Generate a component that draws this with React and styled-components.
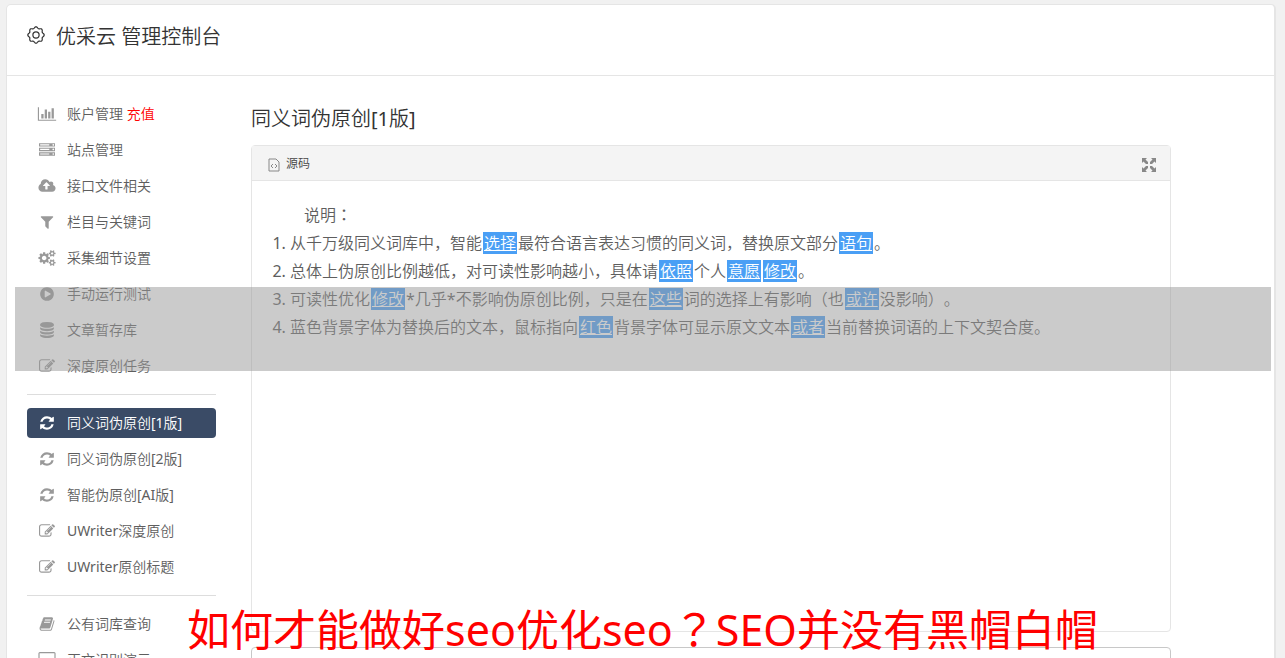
import styled, { createGlobalStyle } from "styled-components";

const icons = {
  chart: {
    viewBox: "0 0 2048 1792",
    d: "M640 896v512h-256v-512h256zm384-512v1024h-256v-1024h256zm1024 1152v128h-2048v-1536h128v1408h1920zm-640-896v768h-256v-768h256zm384-384v1152h-256v-1152h256z",
  },
  server: {
    viewBox: "0 0 1792 1792",
    d: "M128 1408h1024v-128h-1024v128zm0-512h1024v-128h-1024v128zm1568 448q0-40-28-68t-68-28-68 28-28 68 28 68 68 28 68-28 28-68zm-1568-960h1024v-128h-1024v128zm1568 448q0-40-28-68t-68-28-68 28-28 68 28 68 68 28 68-28 28-68zm0-512q0-40-28-68t-68-28-68 28-28 68 28 68 68 28 68-28 28-68zm96 832v384h-1792v-384h1792zm0-512v384h-1792v-384h1792zm0-512v384h-1792v-384h1792z",
  },
  upload: {
    viewBox: "-64 0 1920 1792",
    d: "M1216 864q0-14-9-23l-352-352q-9-9-23-9t-23 9l-351 351q-10 12-10 24 0 14 9 23t23 9h224v352q0 13 9.5 22.5t22.5 9.5h192q13 0 22.5-9.5t9.5-22.5v-352h224q13 0 22.5-9.5t9.5-22.5zm640 288q0 159-112.5 271.5t-271.5 112.5h-1088q-185 0-316.5-131.5t-131.5-316.5q0-130 70-240t188-165q-2-30-2-43 0-212 150-362t362-150q156 0 285.5 87t188.5 231q71-62 166-62 106 0 181 75t75 181q0 76-41 138 130 31 213.5 135.5t83.5 238.5z",
  },
  filter: {
    viewBox: "0 0 1792 1792",
    d: "M1595 295q17 41-14 70l-493 493v742q0 42-39 59-13 5-25 5-27 0-45-19l-256-256q-19-19-19-45v-486l-493-493q-31-29-14-70 17-39 59-39h1280q42 0 59 39z",
  },
  cogs: {
    viewBox: "-64 0 1920 1792",
    d: "M832 896q0-106-75-181t-181-75-181 75-75 181 75 181 181 75 181-75 75-181zm768 512q0-52-38-90t-90-38-90 38-38 90q0 53 37.5 90.5t90.5 37.5 90.5-37.5 37.5-90.5zm0-1024q0-52-38-90t-90-38-90 38-38 90q0 53 37.5 90.5t90.5 37.5 90.5-37.5 37.5-90.5zm-384 421v185q0 10-7 19.5t-16 10.5l-155 24q-11 35-32 76 34 48 90 115 7 11 7 20 0 12-7 19-23 30-82.5 89.5t-78.5 59.5q-11 0-21-7l-115-90q-37 19-77 31-11 108-23 155-7 24-30 24h-186q-11 0-20-7.5t-10-17.5l-23-153q-34-10-75-31l-118 89q-7 7-20 7-11 0-21-8-144-133-144-160 0-9 7-19 10-14 41-53t47-61q-23-44-35-82l-152-24q-10-1-17-9.5t-7-19.5v-185q0-10 7-19.5t16-10.5l155-24q11-35 32-76-34-48-90-115-7-11-7-20 0-12 7-20 22-30 82-89t79-59q11 0 21 7l115 90q34-18 77-32 11-108 23-154 7-24 30-24h186q11 0 20 7.5t10 17.5l23 153q34 10 75 31l118-89q8-7 20-7 11 0 21 8 144 133 144 160 0 8-7 19-12 16-42 54t-45 60q23 48 34 82l152 23q10 2 17 10.5t7 19.5zm640 533v140q0 16-149 31-12 27-30 52 51 113 51 138 0 4-4 7-122 71-124 71-8 0-46-47t-52-68q-20 2-30 2t-30-2q-14 21-52 68t-46 47q-2 0-124-71-4-3-4-7 0-25 51-138-18-25-30-52-149-15-149-31v-140q0-16 149-31 13-29 30-52-51-113-51-138 0-4 4-7 4-2 35-20t59-34 30-16q8 0 46 46.5t52 67.5q20-2 30-2t30 2q51-71 92-112l6-2q4 0 124 70 4 3 4 7 0 25-51 138 17 23 30 52 149 15 149 31zm0-1024v140q0 16-149 31-12 27-30 52 51 113 51 138 0 4-4 7-122 71-124 71-8 0-46-47t-52-68q-20 2-30 2t-30-2q-14 21-52 68t-46 47q-2 0-124-71-4-3-4-7 0-25 51-138-18-25-30-52-149-15-149-31v-140q0-16 149-31 13-29 30-52-51-113-51-138 0-4 4-7 4-2 35-20t59-34 30-16q8 0 46 46.5t52 67.5q20-2 30-2t30 2q51-71 92-112l6-2q4 0 124 70 4 3 4 7 0 25-51 138 17 23 30 52 149 15 149 31z",
  },
  play: {
    viewBox: "0 0 1792 1792",
    d: "M896 128q209 0 385.5 103t279.5 279.5 103 385.5-103 385.5-279.5 279.5-385.5 103-385.5-103-279.5-279.5-103-385.5 103-385.5 279.5-279.5 385.5-103zm384 823q32-18 32-55t-32-55l-544-320q-31-19-64-1-32 19-32 55v640q0 36 32 55 16 8 32 8 17 0 32-9z",
  },
  database: {
    viewBox: "0 0 1792 1792",
    d: "M896 768q237 0 443-43t325-127v170q0 69-103 128t-280 93.5-385 34.5-385-34.5-280-93.5-103-128v-170q119 84 325 127t443 43zm0 768q237 0 443-43t325-127v170q0 69-103 128t-280 93.5-385 34.5-385-34.5-280-93.5-103-128v-170q119 84 325 127t443 43zm0-384q237 0 443-43t325-127v170q0 69-103 128t-280 93.5-385 34.5-385-34.5-280-93.5-103-128v-170q119 84 325 127t443 43zm0-1152q208 0 385 34.5t280 93.5 103 128v128q0 69-103 128t-280 93.5-385 34.5-385-34.5-280-93.5-103-128v-128q0-69 103-128t280-93.5 385-34.5z",
  },
  edit: {
    viewBox: "0 0 1792 1792",
    d: "M888 1184l116-116-152-152-116 116v56h96v96h56zm440-720q-16-16-33 1l-350 350q-17 17-1 33t33-1l350-350q17-17 1-33zm80 594v190q0 119-84.5 203.5t-203.5 84.5h-832q-119 0-203.5-84.5t-84.5-203.5v-832q0-119 84.5-203.5t203.5-84.5h832q63 0 117 25 15 7 18 23 3 17-9 29l-49 49q-14 14-32 8-23-6-45-6h-832q-66 0-113 47t-47 113v832q0 66 47 113t113 47h832q66 0 113-47t47-113v-126q0-13 9-22l64-64q15-15 35-7t20 29zm-96-738l288 288-672 672h-288v-288zm444 132l-92 92-288-288 92-92q28-28 68-28t68 28l152 152q28 28 28 68t-28 68z",
  },
  refresh: {
    viewBox: "0 0 1792 1792",
    d: "M1639 1056q0 5-1 7-64 268-268 434.5t-478 166.5q-146 0-282.5-55t-243.5-157l-129 129q-19 19-45 19t-45-19-19-45v-448q0-26 19-45t45-19h448q26 0 45 19t19 45-19 45l-137 137q71 66 161 102t187 36q134 0 250-65t186-179q11-17 53-117 8-23 30-23h192q13 0 22.5 9.5t9.5 22.5zm25-800v448q0 26-19 45t-45 19h-448q-26 0-45-19t-19-45 19-45l138-138q-148-137-349-137-134 0-250 65t-186 179q-11 17-53 117-8 23-30 23h-199q-13 0-22.5-9.5t-9.5-22.5v-7q65-268 270-434.5t480-166.5q146 0 284 55.5t245 156.5l130-129q19-19 45-19t45 19 19 45z",
  },
  book: {
    viewBox: "0 0 1792 1792",
    d: "M1703 478q40 57 18 129l-275 906q-19 64-76.5 107.5t-122.5 43.5h-923q-77 0-148.5-53.5t-99.5-131.5q-24-67-2-127 0-4 3-27t4-37q1-8-3-21.5t-3-19.5q2-11 8-21t16.5-23.5 16.5-23.5q23-38 45-91.5t30-91.5q3-10 .5-30t-.5-28q3-11 17-28t17-23q21-36 42-92t25-90q1-9-2.5-32t.5-28q4-13 22-30.5t22-22.5q19-26 42.5-84.5t27.5-96.5q1-8-3-25.5t-2-26.5q2-8 9-18t18-23 17-21q8-12 16.5-30.5t15-35 16-36 19.5-32 26.5-23.5 36-11.5 47.5 5.5l-1 3q38-9 51-9h761q74 0 114 56t18 130l-274 906q-36 119-71.5 153.5t-128.5 34.5h-869q-27 0-38 15-11 16-1 43 24 70 144 70h923q29 0 56-15.5t35-41.5l300-987q7-22 5-57 38 15 59 43zm-1064 2q-4 13 2 22.5t20 9.5h608q13 0 25.5-9.5t16.5-22.5l21-64q4-13-2-22.5t-20-9.5h-608q-13 0-25.5 9.5t-16.5 22.5zm-83 256q-4 13 2 22.5t20 9.5h608q13 0 25.5-9.5t16.5-22.5l21-64q4-13-2-22.5t-20-9.5h-608q-13 0-25.5 9.5t-16.5 22.5z",
  },
  desktop: {
    viewBox: "0 0 1920 1792",
    d: "M1792 992v-832q0-13-9.5-22.5t-22.5-9.5h-1600q-13 0-22.5 9.5t-9.5 22.5v832q0 13 9.5 22.5t22.5 9.5h1600q13 0 22.5-9.5t9.5-22.5zm128-832v1088q0 66-47 113t-113 47h-544q0 37 16 77.5t32 71 16 43.5q0 26-19 45t-45 19h-512q-26 0-45-19t-19-45q0-14 16-44t32-70 16-78h-544q-66 0-113-47t-47-113v-1088q0-66 47-113t113-47h1600q66 0 113 47t47 113z",
  },
};

const menu = [
  [
    { icon: "chart", text: "账户管理", extra: "充值" },
    { icon: "server", text: "站点管理" },
    { icon: "upload", text: "接口文件相关" },
    { icon: "filter", text: "栏目与关键词" },
    { icon: "cogs", text: "采集细节设置" },
    { icon: "play", text: "手动运行测试" },
    { icon: "database", text: "文章暂存库" },
    { icon: "edit", text: "深度原创任务" },
  ],
  [
    { icon: "refresh", text: "同义词伪原创[1版]", active: true },
    { icon: "refresh", text: "同义词伪原创[2版]" },
    { icon: "refresh", text: "智能伪原创[AI版]" },
    { icon: "edit", text: "UWriter深度原创" },
    { icon: "edit", text: "UWriter原创标题" },
  ],
  [
    { icon: "book", text: "公有词库查询" },
    { icon: "desktop", text: "正文识别演示" },
  ],
];

const MenuIcon = ({ name }) => (
  <IconSvg viewBox={icons[name].viewBox} aria-hidden="true">
    <path fillRule="evenodd" d={icons[name].d} />
  </IconSvg>
);

// eight lobed outline of the header gear
const gearPath = () => {
  const points = [];
  for (let i = 0; i < 96; i++) {
    const a = (i / 96) * Math.PI * 2;
    const r = 7.5 + 0.7 * Math.cos(8 * a);
    points.push(
      `${(9 + r * Math.cos(a)).toFixed(2)} ${(9 + r * Math.sin(a)).toFixed(2)}`
    );
  }
  return `M${points.join("L")}Z`;
};

const App = () => {
  return (
    <>
      <GlobalStyle />
      <Card>
        <Header>
          <GearSvg viewBox="0 0 18 18" aria-hidden="true">
            <path d={gearPath()} />
            <circle cx="9" cy="9" r="3.1" />
          </GearSvg>
          <Title>优采云 管理控制台</Title>
        </Header>
        <Body>
          <Sidebar>
            {menu.map((group, index) => (
              <MenuGroup key={index}>
                {group.map((item) => (
                  <li key={item.text}>
                    <MenuLink href="#" $active={item.active}>
                      <MenuIcon name={item.icon} />
                      <MenuLabel>
                        {item.text}
                        {item.extra && <Recharge> {item.extra}</Recharge>}
                      </MenuLabel>
                    </MenuLink>
                  </li>
                ))}
              </MenuGroup>
            ))}
          </Sidebar>
          <Main>
            <SectionTitle>同义词伪原创[1版]</SectionTitle>
            <Editor>
              <Toolbar>
                <ToolButton type="button">
                  <SourceSvg viewBox="0 0 12 14" aria-hidden="true">
                    <path d="M1 1h7l3 3v9H1z" />
                    <path d="M5 6L3 8l2 2M7 6l2 2-2 2" />
                  </SourceSvg>
                  源码
                </ToolButton>
                <ToolButton type="button" aria-label="全屏">
                  <ExpandSvg viewBox="0 0 14 14" aria-hidden="true">
                    <path d="M0 0h5L3.500 1.500 6 4v2H4L1.500 3.500 0 5zM14 0v5l-1.500-1.500L10 6H8V4l2.500-2.500L9 0zM0 14V9l1.500 1.500L4 8h2v2l-2.500 2.500L5 14zM14 14H9l1.500-1.500L8 10V8h2l2.500 2.500L14 9z" />
                  </ExpandSvg>
                </ToolButton>
              </Toolbar>
              <Content>
                <Intro>
                  说明<Mark>：</Mark>
                </Intro>
                <Rules>
                  <li>
                    从千万级同义词库中，智能<Word>选择</Word>
                    最符合语言表达习惯的同义词，替换原文部分<Word>语句</Word>。
                  </li>
                  <li>
                    总体上伪原创比例越低，对可读性影响越小，具体请
                    <Word>依照</Word>个人<Word>意愿</Word>
                    <Word>修改</Word>。
                  </li>
                  <li>
                    可读性优化<Word>修改</Word>
                    *几乎*不影响伪原创比例，只是在<Word>这些</Word>
                    词的选择上有影响（也<Word>或许</Word>没影响）。
                  </li>
                  <li>
                    蓝色背景字体为替换后的文本，鼠标指向<Word>红色</Word>
                    背景字体可显示原文文本<Word>或者</Word>
                    当前替换词语的上下文契合度。
                  </li>
                </Rules>
              </Content>
            </Editor>
            <SourceInput aria-label="原文" />
          </Main>
        </Body>
      </Card>
      <Band />
      <Caption>
        如何才能做好seo优化seo<Mark>？</Mark>SEO并没有黑帽白帽
      </Caption>
    </>
  );
};

const GlobalStyle = createGlobalStyle`
  * {
    box-sizing: border-box;
  }

  body {
    margin: 0;
    height: 100vh;
    overflow: hidden;
    background: #f1f1f1;
    color: #5e5e5e;
    font-family: "Noto Sans", "Noto Sans CJK SC DemiLight", "Noto Sans CJK SC", sans-serif;
    font-size: 14px;
    text-spacing-trim: space-all;
  }
`;

const Card = styled.div`
  margin: 4px 9px 0 6px;
  background: #fff;
  border: 1px solid #e5e5e5;
  border-right-width: 2px;
  border-radius: 5px;
`;

const Header = styled.header`
  display: flex;
  align-items: center;
  gap: 11px;
  height: 71px;
  padding: 0 20px 10px;
  border-bottom: 1px solid #e5e5e5;
`;

const GearSvg = styled.svg`
  width: 18px;
  height: 18px;
  fill: none;
  stroke: #333;
  stroke-width: 1.2;
`;

const Title = styled.h1`
  margin: 0;
  padding-top: 3px;
  color: #333;
  font-size: 20px;
  font-weight: 400;
  line-height: 28px;
`;

const Body = styled.div`
  display: flex;
  gap: 35px;
  padding: 23px 103px 23px 20px;
`;

const Sidebar = styled.nav`
  flex: 0 0 189px;
`;

const MenuGroup = styled.ul`
  display: flex;
  flex-direction: column;
  gap: 6px;
  margin: 0;
  padding: 0;
  list-style: none;

  & + & {
    margin-top: 13px;
    padding-top: 13px;
    border-top: 1px solid #ddd;
  }
`;

const MenuLink = styled.a`
  display: flex;
  align-items: center;
  gap: 10px;
  height: 30px;
  padding: 0 10px;
  border-radius: 4px;
  background: ${(props) => (props.$active ? "#3a4b66" : "transparent")};
  color: ${(props) => (props.$active ? "#fff" : "#5e5e5e")};
  text-decoration: none;

  svg {
    fill: ${(props) => (props.$active ? "#fff" : "#999")};
  }
`;

const MenuLabel = styled.span`
  padding-bottom: 2px;
`;

const IconSvg = styled.svg`
  flex: none;
  width: 20px;
  height: 16px;
`;

const Recharge = styled.span`
  color: #f00;
`;

const Main = styled.main`
  flex: 1;
  min-width: 0;
`;

const SectionTitle = styled.h2`
  margin: 6px 0 12px;
  color: #333;
  font-size: 20px;
  font-weight: 400;
  line-height: 28px;
`;

const Editor = styled.section`
  margin-bottom: 15px;
  border: 1px solid #e5e5e5;
  border-radius: 4px;
`;

const Toolbar = styled.div`
  display: flex;
  align-items: center;
  justify-content: space-between;
  height: 35px;
  padding: 0 14px 0 16px;
  border-bottom: 1px solid #e5e5e5;
  background: #f4f4f4;
`;

const ToolButton = styled.button`
  display: flex;
  align-items: center;
  gap: 6px;
  padding: 0;
  border: none;
  background: none;
  color: #444;
  font-family: inherit;
  font-size: 12px;

  svg {
    margin-top: 3px;
  }
`;

const SourceSvg = styled.svg`
  width: 12px;
  height: 14px;
  fill: none;
  stroke: #888;
`;

const ExpandSvg = styled.svg`
  width: 14px;
  height: 14px;
  fill: #888;
`;

const Content = styled.div`
  min-height: 450px;
  padding: 20px;
  font-size: 16px;
  line-height: 28px;
`;

const Intro = styled.p`
  margin: 0;
  text-indent: 2em;
`;

const Rules = styled.ol`
  margin: 0;
  padding: 0 0 0 18px;
`;

const Word = styled.span`
  margin: 0 1px;
  padding: 0 1px;
  background: #4a9ff5;
  color: #fff;
  text-decoration: underline;
`;

// full-width punctuation centred in its cell
const Mark = styled.span`
  font-family: "Noto Sans CJK TC", sans-serif;
  line-height: 1;
`;

const SourceInput = styled.textarea`
  display: block;
  width: 100%;
  height: 120px;
  border: 1px solid #c8c8c8;
  border-radius: 4px;
  resize: none;
`;

const Band = styled.div`
  position: absolute;
  top: 287px;
  left: 15px;
  right: 14px;
  height: 84px;
  background: rgba(151, 151, 151, 0.5);
`;

const Caption = styled.p`
  position: absolute;
  bottom: 0;
  left: 0;
  right: 0;
  margin: 0;
  color: #f00;
  font-family: "Noto Sans", "Noto Sans CJK SC", sans-serif;
  font-size: 43px;
  line-height: 56px;
  text-align: center;
`;

export default App;
